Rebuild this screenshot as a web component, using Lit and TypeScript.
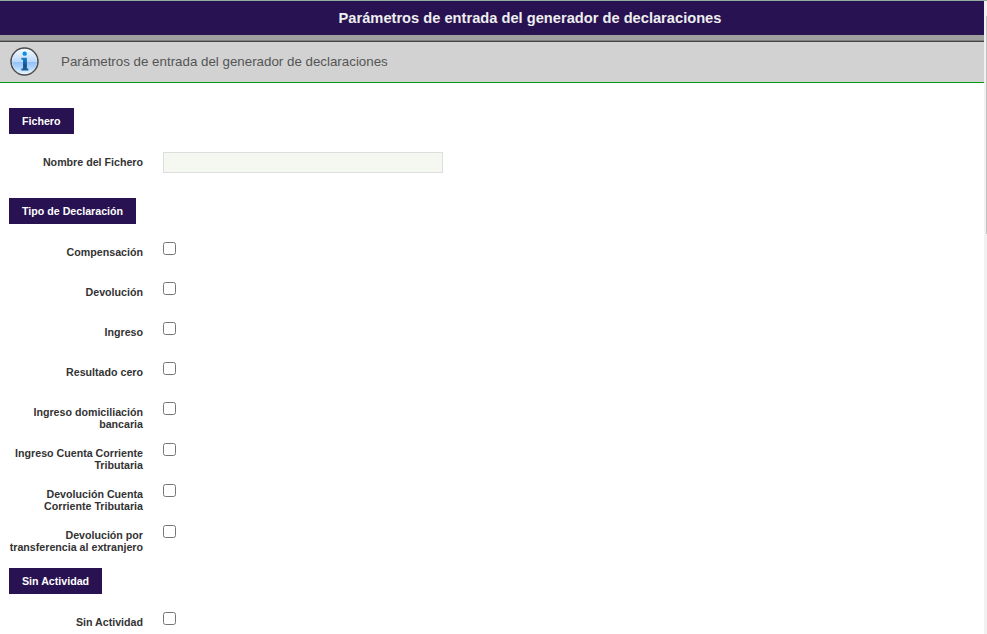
import { LitElement, html, css, svg } from "lit";
import { customElement, property } from "lit/decorators.js";

interface Field {
  label: string;
  kind: "text" | "check";
}

interface Section {
  title: string;
  fields: Field[];
}

const check = (label: string): Field => ({ label, kind: "check" });

const SECTIONS: Section[] = [
  { title: "Fichero", fields: [{ label: "Nombre del Fichero", kind: "text" }] },
  {
    title: "Tipo de Declaración",
    fields: [
      check("Compensación"),
      check("Devolución"),
      check("Ingreso"),
      check("Resultado cero"),
      check("Ingreso domiciliación bancaria"),
      check("Ingreso Cuenta Corriente Tributaria"),
      check("Devolución Cuenta Corriente Tributaria"),
      check("Devolución por transferencia al extranjero"),
    ],
  },
  { title: "Sin Actividad", fields: [check("Sin Actividad")] },
];

const infoIcon = svg`
  <defs>
    <linearGradient id="glass" x1="0" y1="0" x2="0" y2="1">
      <stop offset="0" stop-color="#f4f9ff" />
      <stop offset="0.5" stop-color="#bcdafd" />
      <stop offset="0.52" stop-color="#8fc0fb" />
      <stop offset="0.75" stop-color="#b0d6ff" />
      <stop offset="1" stop-color="#e4f6ff" />
    </linearGradient>
    <linearGradient id="stem" x1="0" y1="0" x2="0" y2="1">
      <stop offset="0" stop-color="#1683cc" />
      <stop offset="0.6" stop-color="#15508a" />
      <stop offset="1" stop-color="#1c5f96" />
    </linearGradient>
  </defs>
  <circle cx="14" cy="14" r="13" fill="#f4f6f8" stroke="#4c4c4c" stroke-width="1.5" />
  <circle cx="14" cy="14" r="12" fill="url(#glass)" />
  <circle cx="14.2" cy="6.4" r="2.1" fill="#0d8de0" />
  <path d="M11 10.4H16.3V20.8H17.7V22.6H11V20.8H12.6V12.2H11Z" fill="url(#stem)" />
`;

@customElement("form-field")
export class FormField extends LitElement {
  @property({ attribute: false }) field!: Field;

  static styles = css`
    :host {
      display: flex;
      align-items: flex-start;
      min-height: 40px;
    }
    .label {
      width: 135px;
      margin-right: 20px;
      padding: 4px 0 13px;
      box-sizing: border-box;
      text-align: right;
      font-weight: bold;
      line-height: 12px;
      color: #333;
    }
    .check {
      width: 13px;
      height: 13px;
      margin: 0;
    }
    .text {
      box-sizing: border-box;
      width: 280px;
      height: 21px;
      margin: 0 0 23px;
      padding: 0 4px;
      border: 1px solid #ddd;
      background: #f5f8f1;
      border-radius: 0;
    }
  `;

  render() {
    const { label, kind } = this.field;
    return html`
      <label class="label" for="control">${label}</label>
      ${kind === "text"
        ? html`<input id="control" class="text" type="text" />`
        : html`<input id="control" class="check" type="checkbox" />`}
    `;
  }
}

@customElement("app-root")
export class AppRoot extends LitElement {
  static styles = css`
    :host {
      display: flex;
      height: 634px;
      overflow: hidden;
      box-sizing: border-box;
      border-top: 1px solid #8fae9f;
      background: #fff;
      font: 10.667px "Liberation Sans", Arial, sans-serif;
    }
    .page {
      flex: 1;
      min-width: 0;
    }
    .title {
      height: 34px;
      margin: 0;
      box-sizing: border-box;
      padding-left: 76px;
      background: #281252;
      color: #eee;
      font-size: 14.667px;
      line-height: 34px;
      text-align: center;
    }
    .divider {
      height: 5px;
      background: #9f9f9f;
      border-bottom: 1px solid #808080;
    }
    .info {
      display: flex;
      align-items: center;
      gap: 22px;
      height: 38px;
      padding: 0 0 2px 10px;
      border-top: 1px solid #444;
      border-bottom: 1px solid #0a9b12;
      background: #d2d2d2;
      color: #555;
      font-size: 13.333px;
    }
    .icon {
      width: 29px;
      height: 29px;
      flex: none;
    }
    .form {
      padding: 25px 9px 0 9px;
    }
    .section {
      margin-bottom: 2px;
    }
    .section-title {
      width: fit-content;
      margin: 0;
      padding: 0 13px;
      background: #281252;
      color: #fff;
      font-size: 10.667px;
      line-height: 26px;
    }
    .fields {
      margin-left: -1px;
      padding-top: 18px;
    }
    .scrollbar {
      width: 3px;
      box-sizing: border-box;
      padding: 15px 0 0 2px;
      background: #f1f1f1;
    }
    .thumb {
      height: 218px;
      background: #c1c1c1;
    }
  `;

  render() {
    return html`
      <main class="page">
        <h1 class="title">Parámetros de entrada del generador de declaraciones</h1>
        <div class="divider"></div>
        <div class="info">
          <svg class="icon" viewBox="0 0 28 28">${infoIcon}</svg>
          <span>Parámetros de entrada del generador de declaraciones</span>
        </div>
        <div class="form">
          ${SECTIONS.map(
            (section) => html`
              <section class="section">
                <h2 class="section-title">${section.title}</h2>
                <div class="fields">
                  ${section.fields.map((f) => html`<form-field .field=${f}></form-field>`)}
                </div>
              </section>
            `
          )}
        </div>
      </main>
      <div class="scrollbar"><div class="thumb"></div></div>
    `;
  }
}
